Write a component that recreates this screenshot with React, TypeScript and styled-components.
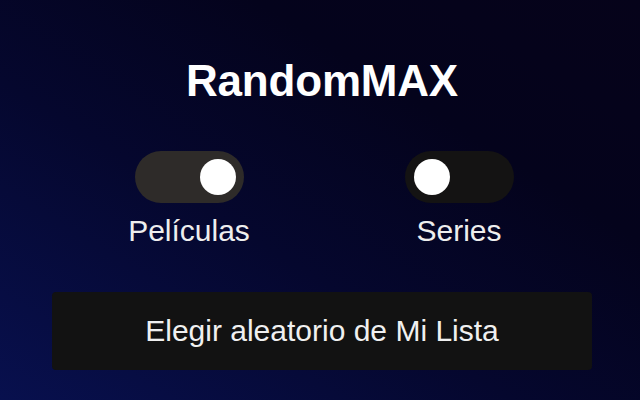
import styled, { createGlobalStyle } from 'styled-components';
import { useState } from 'react';

const GlobalStyle = createGlobalStyle`
  html, body {
    margin: 0;
    padding: 0;
    height: 100%;
  }

  body {
    font-family: 'Liberation Sans', Arial, sans-serif;
    color: #f2f2f2;
  }

  #root {
    height: 100%;
  }
`;

const Popup = styled.main`
  width: 640px;
  height: 400px;
  box-sizing: border-box;
  padding: 55px 48px 0 52px;
  display: flex;
  flex-direction: column;
  align-items: center;
  background: linear-gradient(to top right, #08104e 0%, #05072e 40%, #04031c 70%, #06031a 100%);
  overflow: hidden;
`;

const Title = styled.h1`
  margin: 0;
  font-size: 44px;
  font-weight: 700;
  line-height: 52px;
  color: #ffffff;
  letter-spacing: -0.2px;
`;

const Options = styled.div`
  display: grid;
  grid-template-columns: 1fr 1fr;
  width: 540px;
  margin-top: 44px;
  margin-left: 4px;
`;

const Option = styled.label`
  display: flex;
  flex-direction: column;
  align-items: center;
  gap: 12px;
  cursor: pointer;
`;

const Track = styled.span<{ $on: boolean }>`
  position: relative;
  width: 109px;
  height: 52px;
  border-radius: 26px;
  background: ${(p) => (p.$on ? '#2e2b29' : '#141313')};
  transition: background 0.2s;
`;

const Knob = styled.span<{ $on: boolean }>`
  position: absolute;
  top: 8px;
  left: ${(p) => (p.$on ? '65px' : '9px')};
  width: 36px;
  height: 36px;
  border-radius: 50%;
  background: #ffffff;
  transition: left 0.2s;
`;

const Label = styled.span`
  font-size: 30px;
  line-height: 32px;
  color: #eeeeee;
`;

const PickButton = styled.button`
  margin-top: 45px;
  width: 540px;
  height: 78px;
  border: none;
  border-radius: 4px;
  background: #121212;
  color: #f0f0f0;
  font-family: 'Liberation Sans', Arial, sans-serif;
  font-size: 30px;
  cursor: pointer;
`;

const Switch = ({ on, label, onToggle }: { on: boolean; label: string; onToggle: () => void }) => (
  <Option onClick={onToggle}>
    <Track $on={on}>
      <Knob $on={on} />
    </Track>
    <Label>{label}</Label>
  </Option>
);

const App = () => {
  const [movies, setMovies] = useState(true);
  const [series, setSeries] = useState(false);

  return (
    <>
      <GlobalStyle />
      <Popup>
        <Title>RandomMAX</Title>
        <Options>
          <Switch on={movies} label="Películas" onToggle={() => setMovies(!movies)} />
          <Switch on={series} label="Series" onToggle={() => setSeries(!series)} />
        </Options>
        <PickButton>Elegir aleatorio de Mi Lista</PickButton>
      </Popup>
    </>
  );
};

export default App;
